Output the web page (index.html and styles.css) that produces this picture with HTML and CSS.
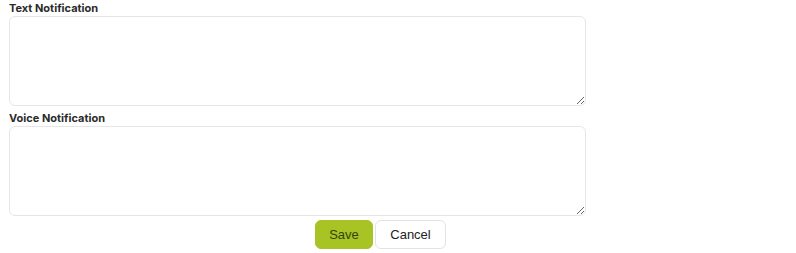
FILE: index.html
```html
<!DOCTYPE html>
<html>
<head>
<meta charset="utf-8">
<link rel="stylesheet" href="styles.css">
</head>
<body>
<div class="form">
  <label class="label">Text Notification</label>
  <textarea class="area"></textarea>
  <label class="label second">Voice Notification</label>
  <textarea class="area"></textarea>
  <div class="actions">
    <button class="btn save">Save</button>
    <button class="btn cancel">Cancel</button>
  </div>
</div>
</body>
</html>
```
FILE: styles.css
```css
html, body {
  margin: 0;
  padding: 0;
  background: #ffffff;
}
.form {
  width: 743px;
  padding: 1px 0 0 9px;
  display: flex;
  flex-direction: column;
  align-items: flex-start;
  font-family: Inter, "Liberation Sans", sans-serif;
}
.label {
  font-size: 11px;
  font-weight: 700;
  color: #2b2b2b;
  line-height: 14px;
  letter-spacing: 0;
  margin-bottom: 1px;
}
.second {
  margin-top: 5px;
}
.area {
  box-sizing: border-box;
  width: 577px;
  height: 90px;
  margin: 0;
  border: 1px solid #e6e6e6;
  border-radius: 6px;
  resize: vertical;
  display: block;
  font-family: Inter, sans-serif;
}
.actions {
  align-self: stretch;
  display: flex;
  justify-content: center;
  gap: 2px;
  margin-top: 4px;
}
.btn {
  height: 29px;
  border-radius: 6px;
  font-family: "Liberation Sans", Arial, sans-serif;
  font-size: 13px;
  padding: 0;
  cursor: pointer;
}
.save {
  width: 58px;
  background: #a7c424;
  border: 1px solid #a7c424;
  color: #34430c;
}
.cancel {
  width: 71px;
  background: #ffffff;
  border: 1px solid #e3e3e3;
  color: #222222;
}
```
